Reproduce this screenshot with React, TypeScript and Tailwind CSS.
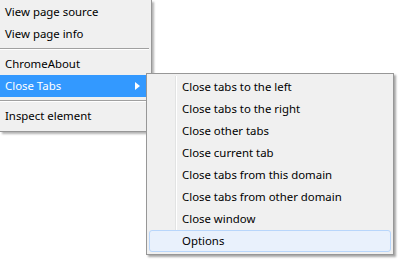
import React from "react";

const font = { fontFamily: '"Noto Sans", "Open Sans", sans-serif' };

function MainItem({ label, active, arrow }: { label: string; active?: boolean; arrow?: boolean }) {
  return (
    <div
      className={`h-[22px] flex items-center pl-[5px] pr-[8px] text-[11.4px] ${
        active ? "bg-[#3399ff] text-white" : "text-black"
      }`}
    >
      <span className="flex-1">{label}</span>
      {arrow && (
        <svg width="5" height="8" viewBox="0 0 5 8" className="mr-[3px]">
          <path d="M0 0 L5 4 L0 8 Z" fill="#ffffff" />
        </svg>
      )}
    </div>
  );
}

function Sep() {
  return (
    <div className="h-[8px] flex flex-col justify-center">
      <div className="h-px bg-[#a0a0a0] mr-[2px]" />
      <div className="h-px bg-white mr-[2px]" />
    </div>
  );
}

function SubItem({ label, hover }: { label: string; hover?: boolean }) {
  return (
    <div
      className={`h-[22px] flex items-center text-[11.4px] text-black pl-[32px] rounded-[3px] border ${
        hover ? "border-[#b8d6fb] bg-[#e9f1fc]" : "border-transparent"
      }`}
    >
      {label}
    </div>
  );
}

export default function App() {
  return (
    <div className="w-[400px] h-[275px] bg-white relative overflow-hidden" style={font}>
      <div className="w-[152px] bg-[#f0f0f0] border-r border-b border-[#979797] shadow-[2px_2px_2px_rgba(0,0,0,0.3)] pt-px pb-[4px]">
        <MainItem label="View page source" />
        <MainItem label="View page info" />
        <Sep />
        <MainItem label="ChromeAbout" />
        <MainItem label="Close Tabs" active arrow />
        <Sep />
        <MainItem label="Inspect element" />
      </div>

      <div className="absolute left-[146px] top-[73px] w-[248px] bg-[#f0f0f0] border border-[#979797] shadow-[2px_2px_2px_rgba(0,0,0,0.35)] p-[2px]">
        <div className="absolute left-[28px] top-[2px] bottom-[2px] w-px bg-[#e2e3e3]" />
        <div className="absolute left-[29px] top-[2px] bottom-[2px] w-px bg-white" />
        <div className="relative flex flex-col">
          <SubItem label="Close tabs to the left" />
          <SubItem label="Close tabs to the right" />
          <SubItem label="Close other tabs" />
          <SubItem label="Close current tab" />
          <SubItem label="Close tabs from this domain" />
          <SubItem label="Close tabs from other domain" />
          <SubItem label="Close window" />
          <SubItem label="Options" hover />
        </div>
      </div>
    </div>
  );
}
